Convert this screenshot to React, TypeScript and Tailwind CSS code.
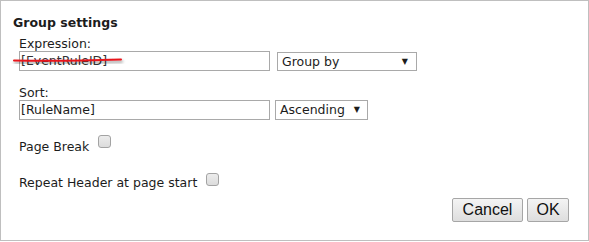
import React from "react";

const font = { fontFamily: '"DejaVu Sans", Verdana, sans-serif' };

function Checkbox() {
  return (
    <span className="inline-block w-[13px] h-[13px] rounded-[3px] border border-[#a3a3a3] bg-gradient-to-b from-[#ececec] to-[#dcdcdc]" />
  );
}

export default function App() {
  return (
    <div className="w-[589px] h-[242px] bg-white relative" style={font}>
      <div className="w-[589px] h-[241px] border border-[#bfbfbf] flex flex-col pl-3 text-[#1c1c1c]">
        <div className="text-[12.5px] font-bold leading-[16px] mt-[14px]">Group settings</div>
        <div className="pl-[6px] flex flex-col">
          <div className="text-[12.5px] leading-[15px] mt-[5px]">Expression:</div>
          <div className="flex items-start mt-[0px]">
            <div className="w-[251px] h-[20px] border border-[#a9a9a9] text-[12.5px] leading-[18px] pl-[1px] text-[#333]">[EventRuleID]</div>
            <div className="ml-[7px] mt-[1px] w-[140px] h-[19px] border border-[#a9a9a9] text-[12.5px] leading-[17px] pl-[4px] flex items-center justify-between pr-[8px]">
              <span>Group by</span>
              <span className="text-[8px] leading-none">▼</span>
            </div>
          </div>
          <div className="text-[12.5px] leading-[15px] mt-[14px]">Sort:</div>
          <div className="flex items-center mt-[0px]">
            <div className="w-[251px] h-[20px] border border-[#a9a9a9] text-[12.5px] leading-[18px] pl-[1px]">[RuleName]</div>
            <div className="ml-[5px] w-[93px] h-[20px] border border-[#a9a9a9] text-[12.5px] leading-[18px] pl-[4px] flex items-center justify-between pr-[7px]">
              <span>Ascending</span>
              <span className="text-[8px] leading-none">▼</span>
            </div>
          </div>
          <div className="flex items-start mt-[19px] text-[12.5px] leading-[15px]">
            <span>Page Break</span>
            <span className="ml-[9px] -mt-[4px] flex"><Checkbox /></span>
          </div>
          <div className="flex items-start mt-[21px] text-[12.5px] leading-[15px]">
            <span>Repeat Header at page start</span>
            <span className="ml-[9px] -mt-[2px] flex"><Checkbox /></span>
          </div>
        </div>
        <div className="flex justify-end pr-[19px] mt-[8px] gap-[4px]" style={{ fontFamily: '"Liberation Sans", Arial, sans-serif' }}>
          <button className="w-[71px] h-[24px] border border-[#a6a6a6] rounded-[2px] bg-gradient-to-b from-[#f4f4f4] to-[#dedede] text-[16px] text-[#111] leading-none">Cancel</button>
          <button className="w-[42px] h-[24px] border border-[#a6a6a6] rounded-[2px] bg-gradient-to-b from-[#f4f4f4] to-[#dedede] text-[16px] text-[#111] leading-none">OK</button>
        </div>
      </div>
      <svg className="absolute left-0 top-0 pointer-events-none" width="140" height="80">
        <defs>
          <filter id="sh" x="-20%" y="-200%" width="140%" height="500%">
            <feDropShadow dx="1" dy="2" stdDeviation="1.5" floodColor="#000" floodOpacity="0.45" />
          </filter>
        </defs>
        <path d="M14 60.5 Q60 61.5 121 59.5" stroke="#e8141c" strokeWidth="2" fill="none" strokeLinecap="round" filter="url(#sh)" />
      </svg>
    </div>
  );
}
